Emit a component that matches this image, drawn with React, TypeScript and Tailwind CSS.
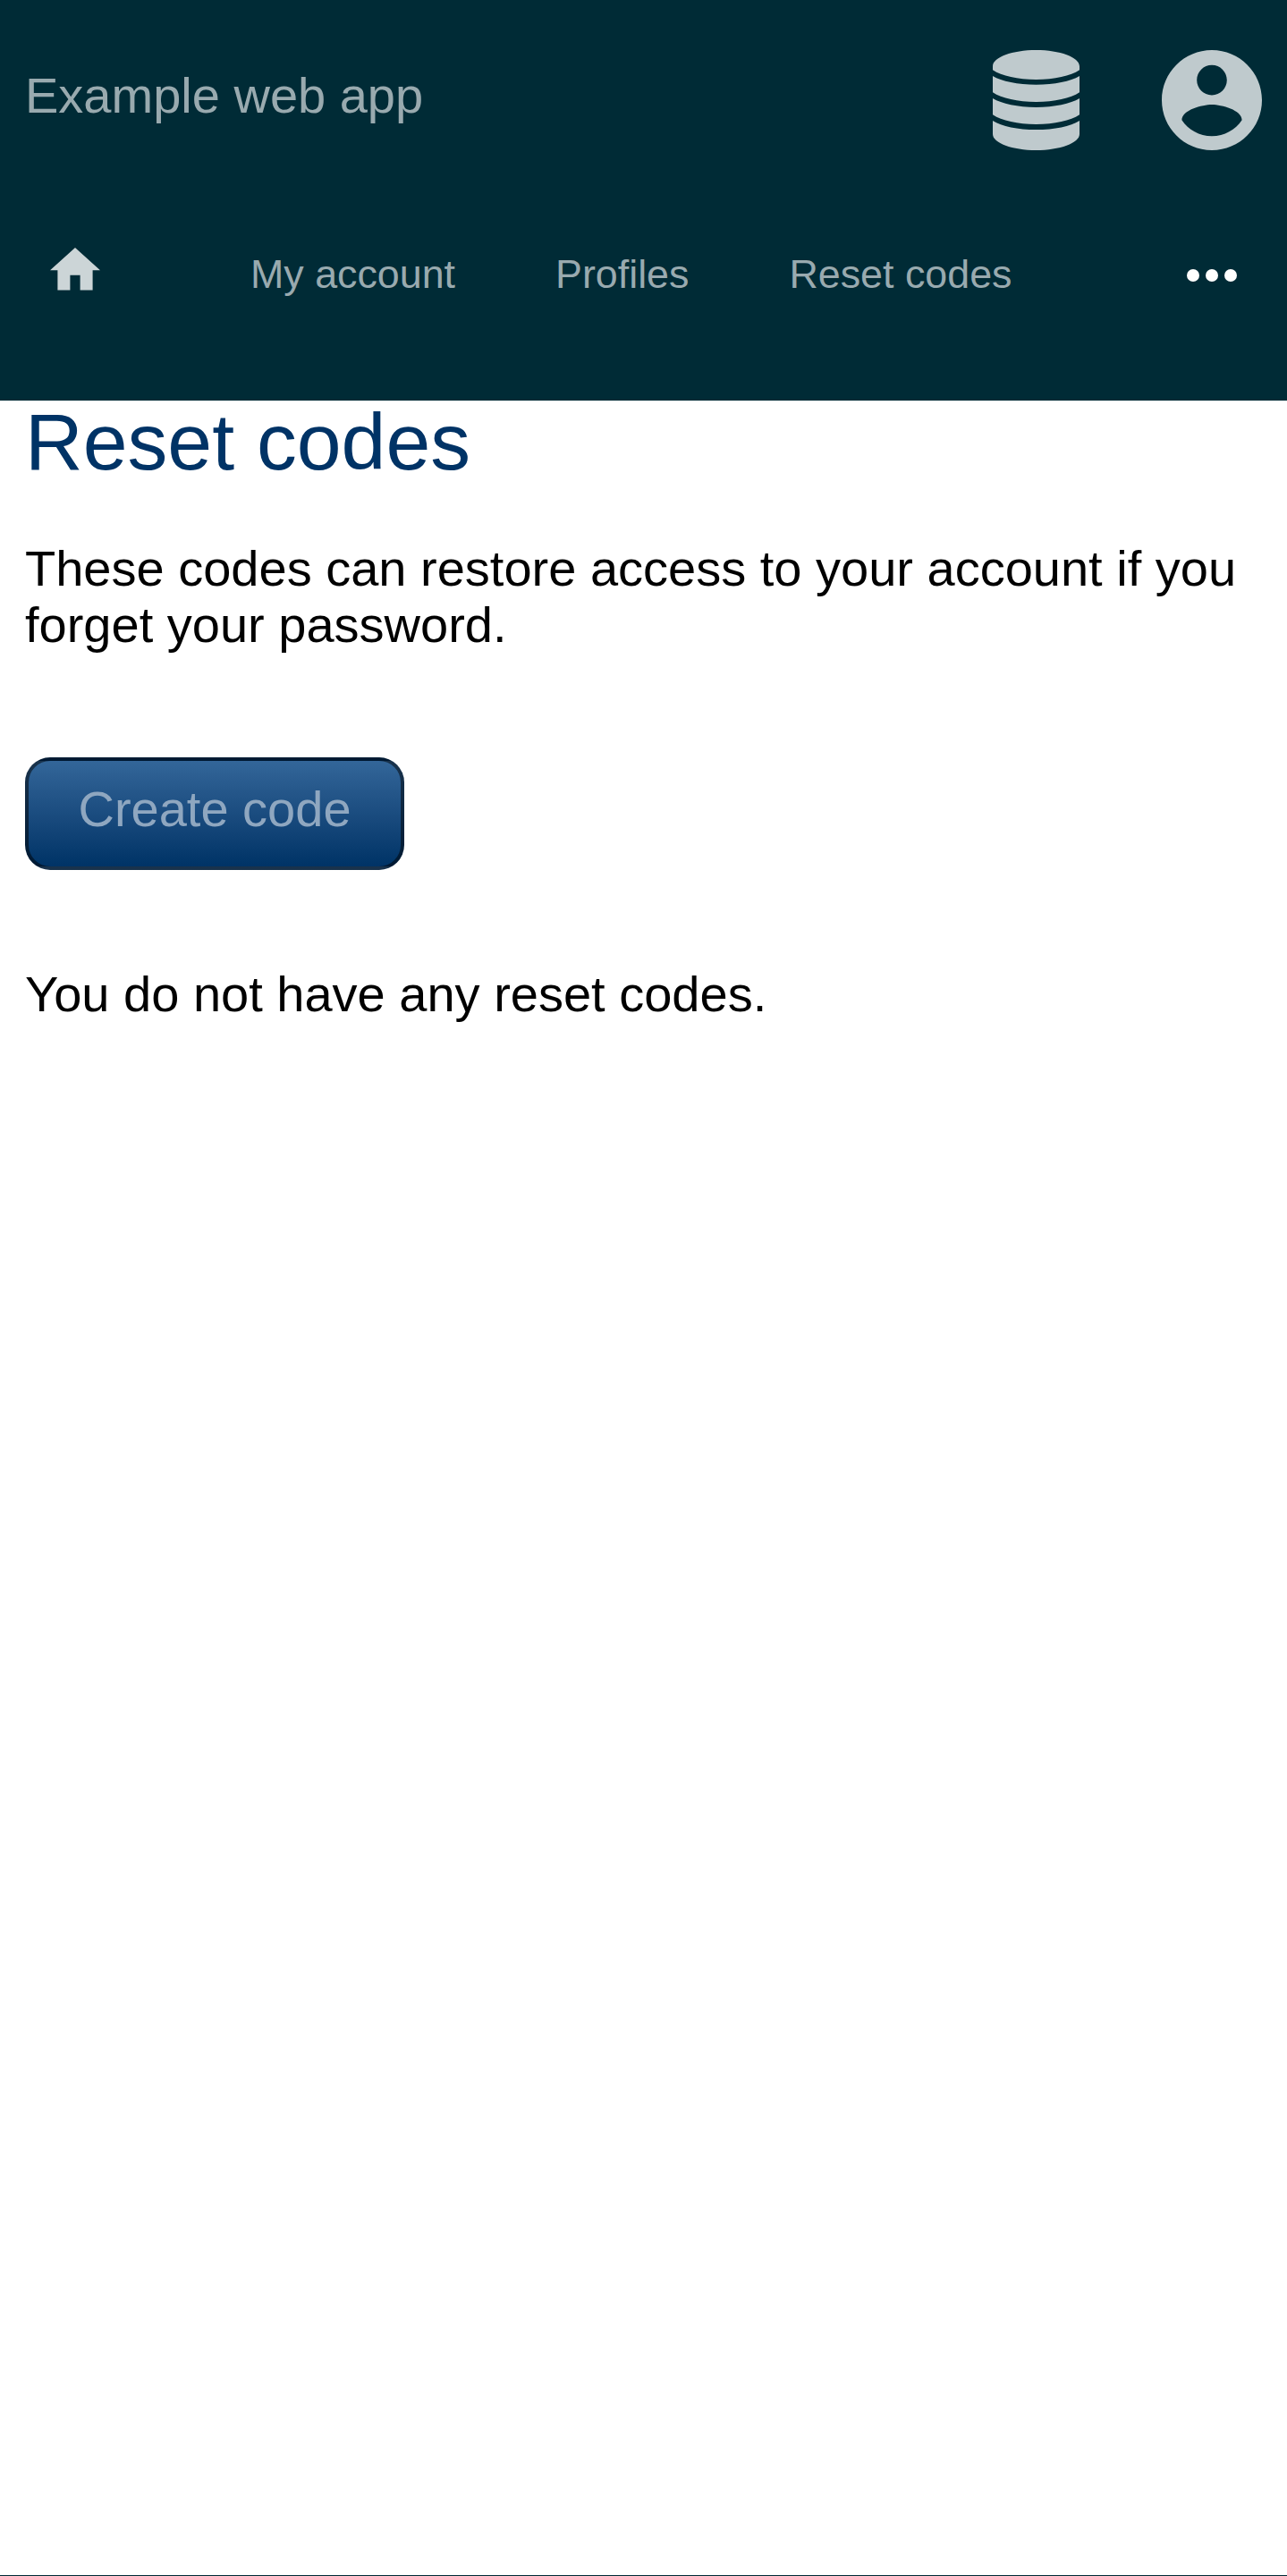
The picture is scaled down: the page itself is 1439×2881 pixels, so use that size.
const DB = "M0 18C0 8 22 0 48.5 0S97 8 97 18V22.3C87 29 69 33 48.5 33S10 29 0 22.3ZM0 29C10 35 28 38.7 48.5 38.7S87 35 97 29V47.3C87 54 69 58 48.5 58S10 54 0 47.3ZM0 54C10 60 28 63.9 48.5 63.9S87 60 97 54V72.3C87 79 69 83 48.5 83S10 79 0 72.3ZM0 79C10 85.3 28 89.1 48.5 89.1S87 85.3 97 79V94C97 104 75 112 48.5 112S0 104 0 94Z";

const navLinks = ["My account", "Profiles", "Reset codes"];

export default function App() {
  return (
    <div className="flex h-[2881px] w-[1439px] flex-col border-b border-[#002b36] bg-white font-['Liberation_Sans',Arial,sans-serif] text-[56px] leading-[63px] text-black">
      <header className="h-[448px] shrink-0 bg-[#002b36]">
        <div className="flex h-[224px] items-center justify-between px-7">
          <a className="mb-[11px] text-[#99aaaf]">Example web app</a>
          <div className="flex gap-[92px]">
            <svg className="h-[112px] w-[97px] fill-[#bfcacd]" viewBox="0 0 97 112">
              <path d={DB} />
            </svg>
            <svg className="h-[112px] w-[112px] fill-[#bfcacd]" viewBox="2 2 20 20">
              <path d="M12 2C6.48 2 2 6.48 2 12s4.48 10 10 10 10-4.48 10-10S17.52 2 12 2zm0 3c1.66 0 3 1.34 3 3s-1.34 3-3 3-3-1.34-3-3 1.34-3 3-3zm0 14.2c-2.5 0-4.71-1.28-6-3.22.03-1.99 4-3.08 6-3.08 1.99 0 5.97 1.09 6 3.08-1.29 1.94-3.5 3.22-6 3.22z" />
            </svg>
          </div>
        </div>
        <nav className="flex h-[168px] items-center px-14 text-[44.8px] leading-[52px] text-[#99aaaf]">
          <svg className="mb-[14px] h-[47.6px] w-[56px] fill-[#ccd5d7]" viewBox="2 3 20 17">
            <path d="M10 20v-6h4v6h5v-8h3L12 3 2 12h3v8z" />
          </svg>
          <div className="mb-[4px] ml-[168px] flex gap-[112px]">
            {navLinks.map((label) => (
              <a key={label}>{label}</a>
            ))}
          </div>
          <svg className="ml-auto h-[14px] w-[56px] fill-white" viewBox="0 0 56 14">
            <circle cx="7" cy="7" r="7" />
            <circle cx="28" cy="7" r="7" />
            <circle cx="49" cy="7" r="7" />
          </svg>
        </nav>
      </header>
      <main className="flex flex-col items-start px-7">
        <h1 className="text-[89.6px] leading-[92px] text-[#003366]">Reset codes</h1>
        <p className="mt-[64px]">These codes can restore access to your account if you forget your password.</p>
        <button className="mt-[117px] h-[126px] w-[424px] rounded-[28px] border-[4px] border-black/50 bg-linear-to-b from-[#336699] to-[#003366] pb-[11px] text-[#8fa7c0]">
          Create code
        </button>
        <p className="mt-[107px]">You do not have any reset codes.</p>
      </main>
    </div>
  );
}
